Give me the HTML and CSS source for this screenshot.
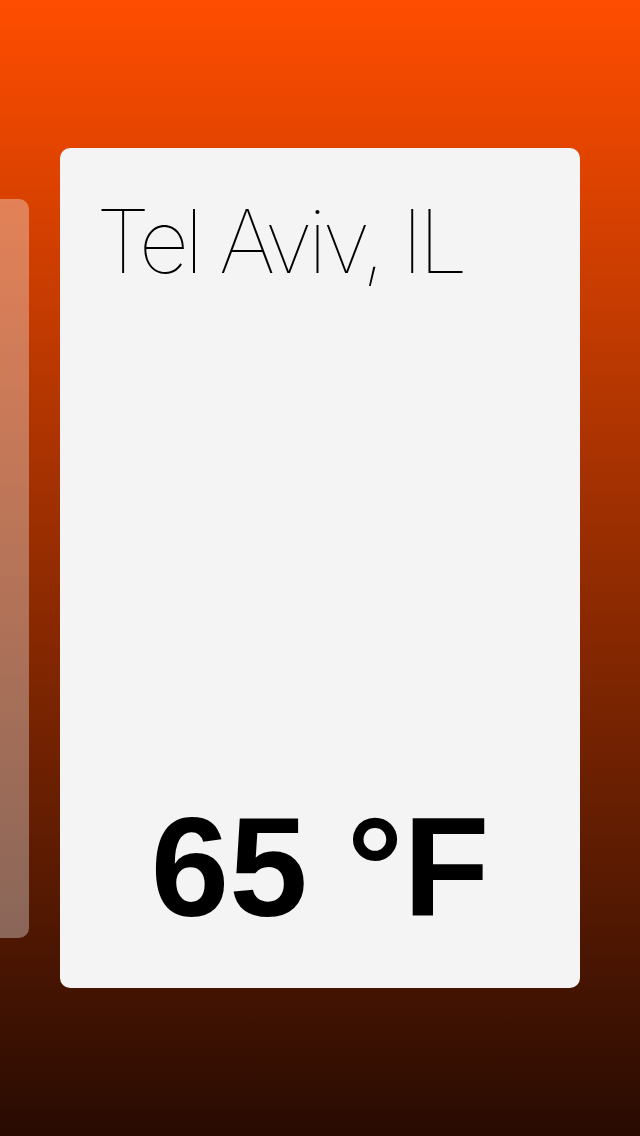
FILE: index.html
```html
<!DOCTYPE html>
<html lang="en">
<head>
<meta charset="utf-8">
<title>Weather</title>
<link rel="stylesheet" href="styles.css">
</head>
<body>
<main class="screen">
  <div class="pager">
    <div class="card card--side"></div>
    <section class="card card--main">
      <h1 class="city">Tel Aviv, IL</h1>
      <p class="temp">65 °F</p>
    </section>
  </div>
</main>
</body>
</html>
```
FILE: styles.css
```css
html, body {
  margin: 0;
  padding: 0;
}
body {
  width: 640px;
  height: 1136px;
  overflow: hidden;
  background: linear-gradient(180deg, #ff4d00 0%, #280b02 100%);
  font-family: "Inter", "Liberation Sans", sans-serif;
}
.screen {
  height: 1136px;
  display: flex;
  align-items: center;
}
.pager {
  display: flex;
  align-items: center;
  gap: 31px;
  margin-left: -491px;
}
.card {
  flex: none;
  width: 520px;
  border-radius: 10px;
  box-sizing: border-box;
}
.card--side {
  height: 739px;
  background: rgba(244, 244, 244, 0.36);
}
.card--main {
  height: 840px;
  background: #f4f4f4;
  display: flex;
  flex-direction: column;
  justify-content: space-between;
  padding: 49px 36px 50px 36px;
}
.city {
  margin: 0;
  font-family: "Inter", sans-serif;
  font-weight: 100;
  font-size: 88px;
  line-height: 1;
  letter-spacing: -4.6px;
  color: #000;
}
.temp {
  margin: 0;
  font-family: "Liberation Sans", Arial, sans-serif;
  font-weight: 700;
  font-size: 141px;
  line-height: 1;
  text-align: center;
  color: #000;
}
```
